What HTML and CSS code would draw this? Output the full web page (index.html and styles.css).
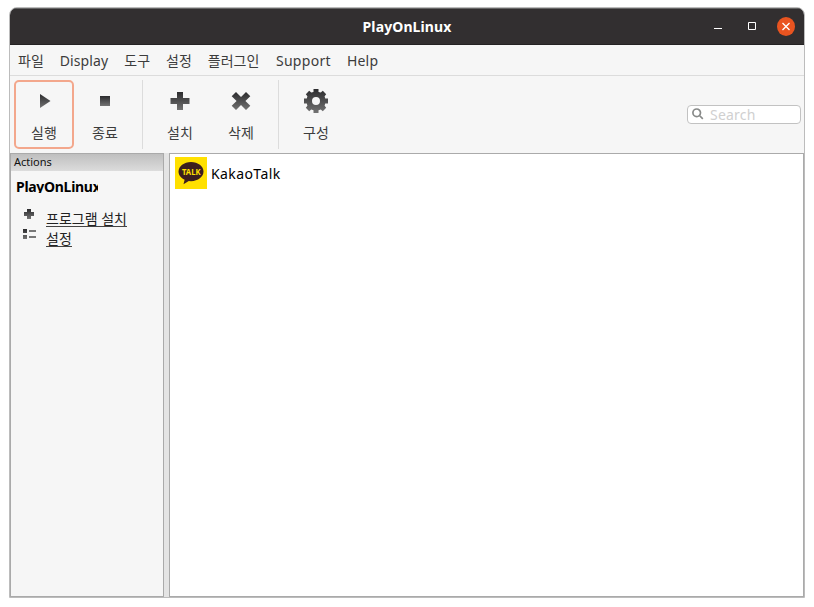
FILE: index.html
```
<!DOCTYPE html>
<html lang="ko">
<head>
<meta charset="utf-8">
<title>PlayOnLinux</title>
<link rel="stylesheet" href="styles.css">
</head>
<body>
<svg class="defs" width="0" height="0"><defs>
<linearGradient id="dark" x1="0" y1="0" x2="0" y2="1"><stop offset="0" stop-color="#2b2b2d"/><stop offset="1" stop-color="#737373"/></linearGradient>
</defs></svg>
<div class="window">
  <header class="titlebar">
    <h1 class="title">PlayOnLinux</h1>
    <div class="controls">
      <svg width="14" height="14" viewBox="0 0 14 14"><path d="M3 8.500h8" stroke="#fff"/></svg>
      <svg width="14" height="14" viewBox="0 0 14 14"><path d="M3.500 2.500h7v7h-7z" stroke="#fff" fill="none"/></svg>
      <svg width="18" height="20" viewBox="0 0 18 20"><ellipse cx="9" cy="9.500" rx="9" ry="9.400" fill="#e95420"/><path d="M5.500 6l7 7M12.500 6l-7 7" stroke="#fff" stroke-width="1.300"/></svg>
    </div>
  </header>
  <nav class="menu">
    <span>파일</span><span class="display">Display</span><span>도구</span><span>설정</span><span>플러그인</span><span class="support">Support</span><span class="help">Help</span>
  </nav>
  <div class="toolbar">
    <button class="tool active"><svg width="28" height="28"><path d="M10 7L20.500 14 10 21z" fill="url(#dark)"/></svg><span>실행</span></button>
    <button class="tool stop"><svg width="28" height="28"><path d="M9 9h10v10H9z" fill="url(#dark)"/></svg><span>종료</span></button>
    <i class="sep"></i>
    <button class="tool install"><svg width="28" height="28"><path d="M11 5h6v6h6.500v6H17v6h-6v-6H4.500v-6H11z" fill="url(#dark)"/></svg><span>설치</span></button>
    <button class="tool remove"><svg width="28" height="28"><path d="M9 5l5 5 5-5 4.300 4.200-4.900 4.800 4.900 4.800L19 23l-5-5-5 5-4.300-4.200L9.600 14 4.700 9.200z" fill="url(#dark)"/></svg><span>삭제</span></button>
    <i class="sep"></i>
    <button class="tool config"><svg width="28" height="28"><path fill-rule="evenodd" fill="url(#dark)" d="M11.500 2h5v3l2.300.4 2-1.600 3.400 3.400-1.600 2 .6 2.300H26v5h-2.800l-.6 2.300 1.600 2-3.400 3.400-2-1.600-2.300.6V26h-5v-2.800l-2.300-.6-2 1.600-3.400-3.400 1.600-2-.6-2.300H2v-5h2.800l.6-2.300-1.600-2 3.400-3.400 2 1.600L11.500 5zM14 10a4 4 0 1 0 0 8 4 4 0 1 0 0-8z"/></svg><span>구성</span></button>
    <div class="search"><svg width="13" height="13" viewBox="0 0 13 13"><path d="M4.700 1a3.800 3.800 0 1 0 0 7.600 3.800 3.800 0 1 0 0-7.600zM7.500 7.500l3.300 3.300" fill="none" stroke="#888a89" stroke-width="1.700"/></svg><span>Search</span></div>
  </div>
  <main class="content">
    <aside class="side">
      <div class="caption">Actions</div>
      <h2 class="heading">PlayOnLinux</h2>
      <a class="action first"><svg width="14" height="14"><path d="M5 1h4v3h3v4H9v3H5V8H2V4h3z" fill="url(#dark)"/></svg><span>프로그램 설치</span></a>
      <a class="action"><svg width="14" height="14"><path d="M1 1h4v4H1zM1 7h4v4H1z" fill="url(#dark)"/><path d="M7 3h7M7 9h7" stroke="#4d4d4d" stroke-width="1.500"/></svg><span>설정</span></a>
    </aside>
    <section class="apps">
      <div class="app"><svg width="32" height="32"><path fill="#ffe000" d="M0 0h32v32H0z"/><path fill="#3b1e1e" d="M16 5C9 5 3.500 9.300 3.500 14.600c0 3.600 2.400 6.600 6.100 8.200L8.500 27.300l5.300-3.300 2.200.2c7 0 12.500-4.300 12.500-9.600S23 5 16 5z"/><text class="talk" x="7" y="17.500" textLength="18.500" lengthAdjust="spacingAndGlyphs">TALK</text></svg><span>KakaoTalk</span></div>
    </section>
  </main>
</div>
</body>
</html>
```
FILE: styles.css
```
* { box-sizing: border-box; }
body { margin: 0; padding: 7px 9px; background: #fff; color: #3c3c3c; font: 14px/20px "Noto Sans", "Noto Sans CJK KR", sans-serif; }
svg { display: block; flex: none; }
.defs { position: absolute; }
.window { width: 796px; height: 591px; border: 1px solid #bcbcbc; border-radius: 8px 8px 0 0; background: #f6f6f6; overflow: hidden; display: flex; flex-direction: column; }
.titlebar { height: 37px; flex: none; background: #322f30; border-top: 1px solid #656565; border-bottom: 1px solid #242223; display: grid; grid-template-columns: 1fr auto 1fr; align-items: center; }
.title { grid-column: 2; margin: 0; font: bold 14px/20px "Noto Sans", sans-serif; letter-spacing: .1px; color: #fff; }
.controls { display: flex; justify-content: flex-end; align-items: center; gap: 20px; padding-right: 9px; }
.controls svg:last-child { margin-left: -2px; }
.menu { height: 31px; flex: none; display: flex; gap: 16px; padding: 6px 8px 0; border-bottom: 1px solid #dcdcdc; white-space: nowrap; }
.display { width: 48.5px; letter-spacing: .1px; }
.support { width: 55px; margin-left: .6px; letter-spacing: .3px; }
.help { width: 32px; letter-spacing: .2px; }
.toolbar { height: 77px; flex: none; display: flex; padding: 4px 3px 4px 4px; }
.tool { width: 60px; height: 69px; border: 2px solid transparent; border-radius: 5px; padding: 5px 0 0; background: none; color: #3c3c3c; font: inherit; display: flex; flex-direction: column; align-items: center; gap: 8px; }
.tool span { line-height: 20px; }
.tool.active { border-color: #f3a78c; }
.stop { margin-left: 1px; }
.sep { width: 1px; height: 69px; background: #dcdcdc; }
.stop + .sep { margin-left: 7px; }
.install { margin-left: 7px; }
.remove { margin-left: 1px; }
.remove + .sep { margin-left: 7px; }
.config { margin-left: 7px; }
.search { margin: 25px 0 0 auto; width: 114px; height: 19px; border: 1px solid #c2c2c2; border-radius: 4px; background: #fff; display: flex; padding: 2px 4px; gap: 5px; color: #d0d0d0; }
.search span { line-height: 14px; letter-spacing: .2px; }
.content { flex: 1; display: grid; grid-template-columns: 154px 635px; column-gap: 5px; background: #e4e4e4; min-height: 0; }
.side { background: #f6f6f6; border: 1px solid #aaa; }
.caption { height: 17px; padding-left: 3px; background: linear-gradient(#bfbfbf, #dcdcdc); color: #111; font-size: 11px; line-height: 16px; }
.heading { margin: 6px 0 0 5px; width: 82px; height: 16px; overflow: hidden; color: #000; font-size: 14px; line-height: 20px; letter-spacing: -.3px; }
.action { display: flex; margin-left: 11px; height: 20px; gap: 10px; color: #222; }
.action.first { margin-top: 15px; }
.action span { height: 19px; line-height: 21px; border-bottom: 1px solid #444; white-space: nowrap; }
.apps { border: 1px solid #aaa; background: #fff; padding: 3px 5px; }
.app { display: flex; align-items: center; gap: 4px; color: #000; }
.app span { letter-spacing: .4px; padding-top: 2px; }
.talk { fill: #ffe000; font: bold 8px "Noto Sans", sans-serif; }
```
